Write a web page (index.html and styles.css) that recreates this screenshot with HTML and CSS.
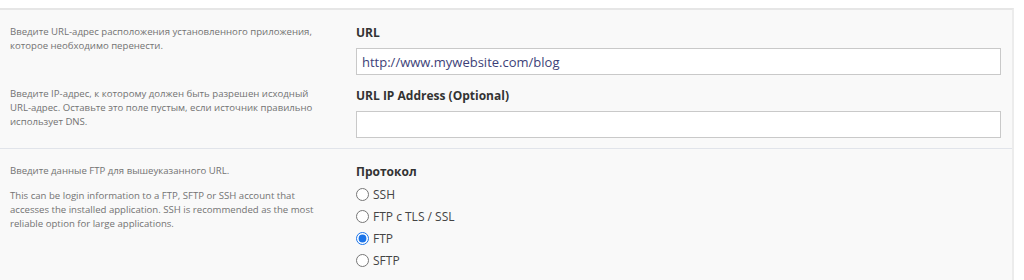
FILE: index.html
```html
<!DOCTYPE html>
<html lang="ru">
<head>
<meta charset="utf-8">
<link rel="stylesheet" href="styles.css">
</head>
<body>
<div class="page">
  <div class="panel">
    <section class="row">
      <div class="help">
        <p class="help-item first">Введите URL-адрес расположения установленного приложения, которое необходимо перенести.</p>
        <p class="help-item second">Введите IP-адрес, к которому должен быть разрешен исходный URL-адрес. Оставьте это поле пустым, если источник правильно использует DNS.</p>
      </div>
      <div class="fields">
        <label class="label" for="url">URL</label>
        <input class="input" id="url" type="text" value="http://www.mywebsite.com/blog">
        <label class="label label-2" for="ip">URL IP Address (Optional)</label>
        <input class="input" id="ip" type="text" value="">
      </div>
    </section>
    <section class="row row-2">
      <div class="help">
        <p class="help-item">Введите данные FTP для вышеуказанного URL.</p>
        <p class="help-item gap">This can be login information to a FTP, SFTP or SSH account that accesses the installed application. SSH is recommended as the most reliable option for large applications.</p>
      </div>
      <div class="fields">
        <div class="label">Протокол</div>
        <label class="radio"><input type="radio" name="proto"><span>SSH</span></label>
        <label class="radio"><input type="radio" name="proto"><span>FTP с TLS / SSL</span></label>
        <label class="radio"><input type="radio" name="proto" checked><span>FTP</span></label>
        <label class="radio"><input type="radio" name="proto"><span>SFTP</span></label>
      </div>
    </section>
  </div>
</div>
</body>
</html>
```
FILE: styles.css
```css
html, body {
  margin: 0;
  padding: 0;
  background: #fdfdfd;
}
body {
  font-family: "Open Sans", "Liberation Sans", sans-serif;
  width: 1024px;
  height: 280px;
  overflow: hidden;
}
.page {
  padding-top: 8px;
  background: #ffffff;
}
.panel {
  width: 1012px;
  background: #f9f9f9;
  border-top: 2px solid #e6e6e6;
  border-right: 2px solid #ececec;
  height: 270px;
}
.row {
  display: grid;
  grid-template-columns: 340px 1fr;
  border-bottom: 1px solid #e1e4ea;
  height: 139px;
  box-sizing: border-box;
}
.row-2 {
  border-bottom: none;
  height: auto;
}
.help {
  padding: 15px 10px 0 10px;
}
.help-item {
  margin: 0;
  font-size: 9.6px;
  line-height: 14px;
  color: #737373;
}
.help-item.second {
  margin-top: 34px;
}
.help-item.gap {
  margin-top: 11px;
}
.fields {
  padding: 14px 12px 0 16px;
  display: flex;
  flex-direction: column;
}
.label {
  font-size: 12px;
  font-weight: 700;
  color: #333333;
  line-height: 17px;
  margin-bottom: 7px;
}
.label-2 {
  margin-top: 12px;
  margin-bottom: 7px;
}
.input {
  box-sizing: border-box;
  width: 645px;
  height: 27px;
  border: 1px solid #c9c9c9;
  background: #ffffff;
  padding: 0 5px;
  font-family: "Open Sans", "Liberation Sans", sans-serif;
  font-size: 13px;
  color: #3d3f78;
  outline: none;
  margin: 0;
}
.row-2 .label {
  margin-bottom: 3px;
}
.radio {
  display: flex;
  align-items: center;
  height: 22px;
  font-size: 12px;
  color: #444444;
}
.radio input {
  margin: 0 4px 0 0;
  width: 13px;
  height: 13px;
  accent-color: #1a73e8;
}
```
